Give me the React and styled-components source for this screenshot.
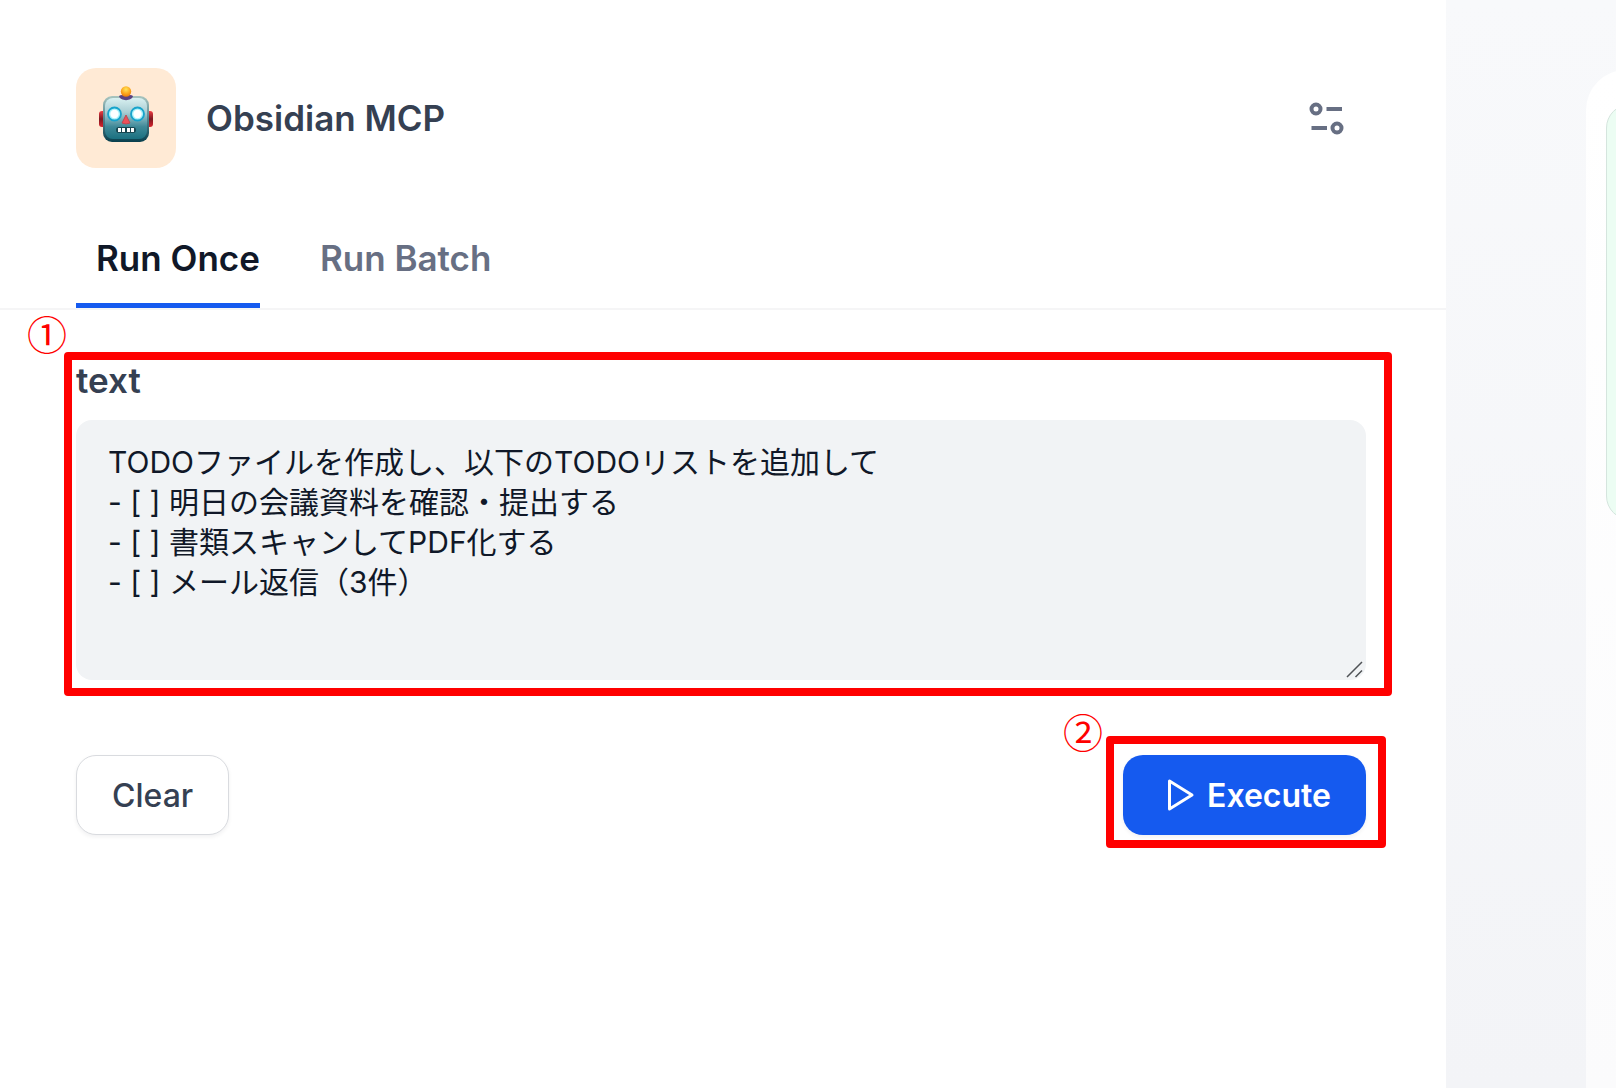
import React, { useState } from "react";
import styled, { createGlobalStyle } from "styled-components";

const GlobalStyle = createGlobalStyle`
  *, *::before, *::after { box-sizing: border-box; }
  body {
    margin: 0;
    font-family: Inter, "Noto Sans CJK JP", sans-serif;
    color: #354052;
    overflow: hidden;
  }
  button, textarea { font: inherit; }
`;

const Page = styled.div`
  display: flex;
  min-height: 100vh;
  background: linear-gradient(180deg, #f8f9fb 0%, #f3f4f7 100%);
`;

const RunPanel = styled.main`
  flex: 1;
  min-width: 0;
  background: #fff;
`;

const ResultSide = styled.aside`
  flex: 0 0 170px;
  display: flex;
  padding: 70px 0 0 140px;
  overflow: hidden;
`;

const ResultPanel = styled.section`
  flex: 0 0 600px;
  padding: 34px 20px;
  border-radius: 40px 0 0 0;
  background: linear-gradient(180deg, #fff 0%, #fbfbfc 100%);
`;

const ResultCard = styled.div`
  height: 416px;
  border: 1px solid #d5e5de;
  border-radius: 24px;
  background: #ecfdf3;
`;

const Header = styled.header`
  display: flex;
  align-items: center;
  gap: 30px;
  padding: 68px 100px 0 76px;
`;

const Avatar = styled.div`
  display: flex;
  align-items: flex-start;
  justify-content: center;
  width: 100px;
  height: 100px;
  padding-top: 16px;
  border-radius: 20px;
  background: #ffead5;
`;

const Title = styled.h1`
  flex: 1;
  margin: 0;
  font-size: 35px;
  font-weight: 600;
  line-height: 48px;
`;

const IconButton = styled.button`
  display: grid;
  place-items: center;
  width: 40px;
  height: 40px;
  padding: 0;
  border: 0;
  background: none;
  color: #676f83;
`;

const Tabs = styled.nav`
  display: flex;
  gap: 40px;
  margin-top: 56px;
  padding: 0 76px;
  border-bottom: 2px solid #f5f5f6;
`;

const Tab = styled.button`
  height: 84px;
  padding: 0 0 12px 20px;
  border: 0;
  border-bottom: 5px solid ${(p) => (p.$active ? "#155aef" : "transparent")};
  background: none;
  color: ${(p) => (p.$active ? "#101828" : "#676f83")};
  font-size: 35px;
  font-weight: 600;
  line-height: 48px;
  white-space: nowrap;
`;

const Form = styled.form`
  padding: 42px 54px 0 64px;
`;

const Marked = styled.div`
  position: relative;
  border: 8px solid #f00;
  border-radius: 4px;
`;

const Marker = styled.span`
  position: absolute;
  top: ${(p) => p.$top}px;
  left: ${(p) => p.$left}px;
  color: #f00;
  font-family: "Noto Sans CJK JP", sans-serif;
  font-size: 40px;
  font-weight: 400;
  line-height: 40px;
`;

const Field = styled(Marked)`
  padding: 0 18px 8px 4px;
`;

const Label = styled.label`
  display: block;
  padding: 0 0 20px;
  font-size: 35px;
  font-weight: 600;
  line-height: 40px;
`;

const TextWrap = styled.div`
  position: relative;
`;

const TextArea = styled.textarea`
  display: block;
  width: 100%;
  height: 260px;
  padding: 22px 32px;
  border: 0;
  border-radius: 16px;
  outline: 0;
  background: #f1f3f5;
  color: #101828;
  font-size: 30px;
  line-height: 40px;
  resize: none;
`;

const Grip = styled.svg`
  position: absolute;
  right: 3px;
  bottom: 2px;
  pointer-events: none;
`;

const Actions = styled.div`
  display: flex;
  align-items: flex-end;
  justify-content: space-between;
  margin-top: 40px;
  padding: 0 6px 0 12px;
`;

const ClearSlot = styled.div`
  padding-bottom: 13px;
`;

const ExecuteFrame = styled(Marked)`
  padding: 11px 12px 5px 9px;
`;

const Button = styled.button`
  display: flex;
  align-items: center;
  gap: 8px;
  height: 80px;
  padding: 0 ${(p) => (p.$primary ? "35px 0 40px" : "35px")};
  border: ${(p) => (p.$primary ? "0" : "1px solid #d9dbdf")};
  border-radius: 20px;
  background: ${(p) => (p.$primary ? "#155aef" : "#fff")};
  color: ${(p) => (p.$primary ? "#fff" : "#354052")};
  box-shadow: 0 2px 4px rgba(16, 24, 40, 0.06);
  font-size: 32px;
  font-weight: ${(p) => (p.$primary ? 600 : 500)};
`;

const Robot = () => (
  <svg width="56" height="60" viewBox="0 0 56 60" aria-hidden="true">
    <defs>
      <linearGradient id="face" x1="0" y1="0" x2="0" y2="1">
        <stop offset="0" stopColor="#d9f1f1" />
        <stop offset="0.35" stopColor="#a9cdd3" />
        <stop offset="0.7" stopColor="#3f8998" />
        <stop offset="1" stopColor="#1a7080" />
      </linearGradient>
      <linearGradient id="rim" x1="0" y1="0" x2="0" y2="1">
        <stop offset="0" stopColor="#a9c5bf" />
        <stop offset="0.5" stopColor="#528591" />
        <stop offset="1" stopColor="#083f4d" />
      </linearGradient>
      <linearGradient id="ear" x1="0" y1="0" x2="0" y2="1">
        <stop offset="0" stopColor="#ef3b42" />
        <stop offset="0.5" stopColor="#7c1820" />
        <stop offset="1" stopColor="#d8232c" />
      </linearGradient>
      <radialGradient id="bulb" cx="0.5" cy="0.3" r="0.7">
        <stop offset="0" stopColor="#ffe45a" />
        <stop offset="0.6" stopColor="#fca61c" />
        <stop offset="1" stopColor="#e97b0c" />
      </radialGradient>
    </defs>
    <rect x="1" y="27" width="8" height="16" rx="3" fill="url(#ear)" />
    <rect x="47" y="27" width="8" height="16" rx="3" fill="url(#ear)" />
    <rect x="5" y="12" width="46" height="46" rx="9" fill="url(#rim)" />
    <rect x="7" y="14" width="42" height="41" rx="8" fill="url(#face)" />
    <path d="M21 12c3-2 11-2 14 0-1 5.500-13 5.500-14 0z" fill="#5c437f" />
    <circle cx="28" cy="7.500" r="5.200" fill="url(#bulb)" />
    <circle cx="16.500" cy="30" r="6.500" fill="#a8f2fb" stroke="#17a3cb" strokeWidth="1.800" />
    <circle cx="16.500" cy="30" r="4.200" fill="#fff" />
    <circle cx="39.500" cy="30" r="6.500" fill="#a8f2fb" stroke="#17a3cb" strokeWidth="1.800" />
    <circle cx="39.500" cy="30" r="4.200" fill="#fff" />
    <path d="M28 31l4 8q-4 2-8 0z" fill="#ee5058" stroke="#bd4851" />
    <rect x="18" y="43" width="20" height="6" rx="3" fill="#174650" />
    <path d="M20 44h3v4h-3zM24 44h3v4h-3zM29 44h3v4h-3zM33 44h3v4h-3z" fill="#fff" />
  </svg>
);

const SettingsIcon = () => (
  <svg width="40" height="40" viewBox="0 0 40 40" fill="none" stroke="currentColor" strokeWidth="4" aria-hidden="true">
    <circle cx="10" cy="11" r="4.500" />
    <path d="M20.500 11h15.500M5.500 30h15.500" />
    <circle cx="31" cy="30" r="4.500" />
  </svg>
);

const PlayIcon = () => (
  <svg width="36" height="36" viewBox="0 0 36 36" fill="none" stroke="currentColor" strokeWidth="3" strokeLinejoin="round" aria-hidden="true">
    <path d="M6.500 4v28L29 18z" />
  </svg>
);

const INITIAL_TEXT = `TODOファイルを作成し、以下のTODOリストを追加して
- [ ] 明日の会議資料を確認・提出する
- [ ] 書類スキャンしてPDF化する
- [ ] メール返信（3件）`;

export default function App() {
  const [text, setText] = useState(INITIAL_TEXT);
  const [tab, setTab] = useState("Run Once");

  return (
    <>
      <GlobalStyle />
      <Page>
        <RunPanel>
          <Header>
            <Avatar><Robot /></Avatar>
            <Title>Obsidian MCP</Title>
            <IconButton type="button" aria-label="Settings"><SettingsIcon /></IconButton>
          </Header>
          <Tabs>
            {["Run Once", "Run Batch"].map((name) => (
              <Tab key={name} type="button" $active={tab === name} onClick={() => setTab(name)}>{name}</Tab>
            ))}
          </Tabs>
          <Form onSubmit={(e) => e.preventDefault()}>
            <Field>
              <Marker $top={-47} $left={-45}>①</Marker>
              <Label htmlFor="text">text</Label>
              <TextWrap>
                <TextArea id="text" value={text} onChange={(e) => setText(e.target.value)} />
                <Grip width="17" height="17" viewBox="0 0 17 17" fill="none" stroke="#4f5256" strokeWidth="1.500" aria-hidden="true">
                  <path d="M1 16L16 1M9.500 16L16 9.500" />
                </Grip>
              </TextWrap>
            </Field>
            <Actions>
              <ClearSlot>
                <Button type="button" onClick={() => setText("")}>Clear</Button>
              </ClearSlot>
              <ExecuteFrame>
                <Marker $top={-33} $left={-51}>②</Marker>
                <Button type="submit" $primary><PlayIcon />Execute</Button>
              </ExecuteFrame>
            </Actions>
          </Form>
        </RunPanel>
        <ResultSide>
          <ResultPanel><ResultCard /></ResultPanel>
        </ResultSide>
      </Page>
    </>
  );
}
